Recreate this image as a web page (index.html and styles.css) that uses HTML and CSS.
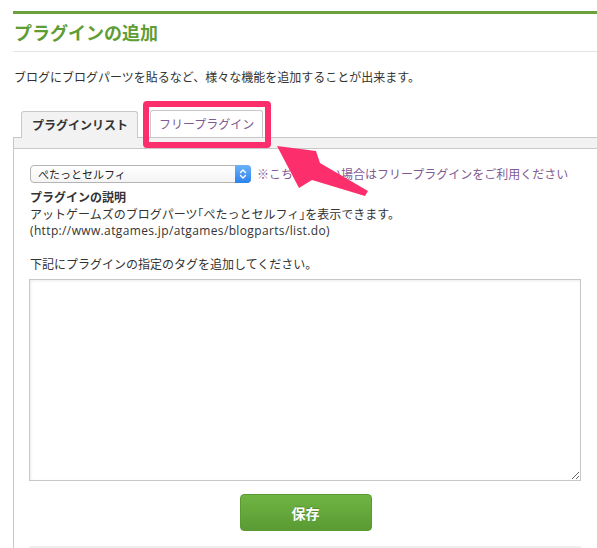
FILE: index.html
```html
<!DOCTYPE html>
<html lang="ja">
<head>
<meta charset="utf-8">
<title>プラグインの追加</title>
<link rel="stylesheet" href="styles.css">
</head>
<body>
<div class="page">
  <div class="header">
    <h1 class="title">プラグインの追加</h1>
  </div>
  <p class="lead">ブログにブログパーツを貼るなど、様々な機能を追加することが出来ます。</p>

  <div class="tabs">
    <div class="tab tab-active">プラグインリスト</div>
    <div class="tab tab-link">フリープラグイン</div>
  </div>

  <div class="panel">
    <div class="panel-band"></div>
    <div class="panel-body">
      <div class="select-row">
        <div class="select-wrap">
          <select class="select">
            <option>ぺたっとセルフィ</option>
          </select>
          <span class="select-btn">
            <svg width="8" height="12" viewBox="0 0 8 12"><path d="M1.5 4.5 L4 2 L6.5 4.5 M1.5 7.5 L4 10 L6.5 7.5" fill="none" stroke="#fff" stroke-width="1.4" stroke-linecap="round" stroke-linejoin="round"/></svg>
          </span>
        </div>
        <span class="note">※こちらにない場合はフリープラグインをご利用ください</span>
      </div>
      <h2 class="sub">プラグインの説明</h2>
      <p class="desc">アットゲームズのブログパーツ<span class="half">「</span>ぺたっとセルフィ<span class="half">」</span>を表示できます。<br><span class="url">(http://www.atgames.jp/atgames/blogparts/list.do)</span></p>
      <p class="instr">下記にプラグインの指定のタグを追加してください。</p>
      <textarea class="tag-area"></textarea>
      <div class="actions">
        <button class="save">保存</button>
      </div>
      <div class="footer-band"></div>
    </div>
  </div>

  <div class="highlight"></div>
  <svg class="arrow" width="597" height="548" viewBox="0 0 597 548">
    <polygon points="277,146 316,151 320,163 368,191 365,196 312,180 299,188" fill="#fc2f6c"/>
  </svg>
</div>
</body>
</html>
```

FILE: styles.css
```css
html, body {
  margin: 0;
  padding: 0;
  background: #fff;
}
body {
  font-family: "Open Sans", "Noto Sans CJK JP", sans-serif;
  font-size: 12px;
  color: #333;
  width: 597px;
  height: 548px;
  overflow: hidden;
}
.page {
  position: relative;
  padding: 11px 0 0 13px;
}
.header {
  border-top: 3px solid #6aa13a;
  border-bottom: 1px solid #e2e2e2;
  padding: 6px 0 7px 1px;
}
.title {
  margin: 0;
  font-size: 18px;
  line-height: 24px;
  font-weight: bold;
  color: #5f9d35;
  font-family: "Noto Sans CJK JP", sans-serif;
}
.lead {
  margin: 18px 0 0 1px;
  line-height: 16px;
  color: #333;
}
.tabs {
  display: flex;
  align-items: flex-end;
  gap: 12px;
  margin-top: 24px;
  padding-left: 8px;
  position: relative;
  z-index: 1;
}
.tab {
  height: 26px;
  line-height: 25px;
  padding: 0 10px;
  border: 1px solid #c8c8c8;
  border-bottom: none;
  border-radius: 3px 3px 0 0;
  white-space: nowrap;
  font-family: "Noto Sans CJK JP", sans-serif;
}
.tab-active {
  background: #f2f2f2;
  font-weight: bold;
  color: #333;
  width: 95px;
  margin-bottom: -1px;
}
.tab-link {
  background: #fff;
  color: #7f5b93;
  padding: 0 8px;
}
.panel {
  border-left: 1px solid #c8c8c8;
}
.panel-band {
  height: 10px;
  background: #f2f2f2;
  border-top: 1px solid #c8c8c8;
  border-bottom: 1px solid #c8c8c8;
}
.panel-body {
  padding: 16px 16px 0 16px;
}
.select-row {
  display: flex;
  align-items: center;
  gap: 6px;
}
.select-wrap {
  position: relative;
  width: 221px;
  height: 18px;
}
.select {
  -webkit-appearance: none;
  appearance: none;
  box-sizing: border-box;
  width: 221px;
  height: 18px;
  margin: 0;
  padding: 0 20px 0 7px;
  border: 1px solid #b4b4b4;
  border-radius: 4px;
  background: linear-gradient(#ffffff, #f4f4f4);
  font-family: "Noto Sans CJK JP", sans-serif;
  font-size: 11px;
  color: #222;
  line-height: 16px;
}
.select-btn {
  position: absolute;
  right: 0;
  top: 0;
  width: 16px;
  height: 18px;
  border-radius: 0 4px 4px 0;
  background: linear-gradient(#6cb2f8, #2c82ee);
  display: flex;
  align-items: center;
  justify-content: center;
}
.note {
  color: #7f5b93;
  font-size: 12px;
  line-height: 16px;
  white-space: nowrap;
  font-family: "Noto Sans CJK JP", sans-serif;
}
.sub {
  margin: 5px 0 0 0;
  font-size: 12px;
  line-height: 18px;
  font-weight: bold;
  color: #333;
  font-family: "Noto Sans CJK JP", sans-serif;
}
.desc {
  margin: 1px 0 0 0;
  line-height: 16px;
  height: 32px;
}
.half {
  font-family: "Noto Sans CJK JP", sans-serif;
  font-feature-settings: "halt" 1;
  line-height: 1;
}
.url {
  letter-spacing: 0.36px;
}
.instr {
  margin: 18px 0 0 0;
  line-height: 16px;
}
.tag-area {
  display: block;
  box-sizing: border-box;
  width: 552px;
  height: 202px;
  margin: 6px 0 0 -1px;
  border: 1px solid #c8c8c8;
  box-shadow: inset 1px 1px 3px rgba(0,0,0,0.08);
  border-radius: 0;
  resize: both;
  background: #fff;
}
.actions {
  display: flex;
  justify-content: center;
  margin-top: 13px;
}
.save {
  width: 132px;
  height: 37px;
  border: 1px solid #5b9a33;
  border-radius: 4px;
  background: linear-gradient(#6fb543, #5a9a33);
  color: #fff;
  font-family: "Noto Sans CJK JP", sans-serif;
  font-size: 14px;
  font-weight: bold;
  text-shadow: 0 -1px 0 rgba(0,0,0,0.2);
  padding: 0;
  cursor: pointer;
}
.footer-band {
  height: 10px;
  margin: 15px 0 0 -1px;
  width: 552px;
  background: #efefef;
}
.highlight {
  position: absolute;
  left: 143px;
  top: 101px;
  width: 116px;
  height: 35px;
  border: 6px solid #fc2f6c;
  border-radius: 4px;
  z-index: 2;
}
.arrow {
  position: absolute;
  left: 0;
  top: 0;
  z-index: 3;
  pointer-events: none;
}
```
